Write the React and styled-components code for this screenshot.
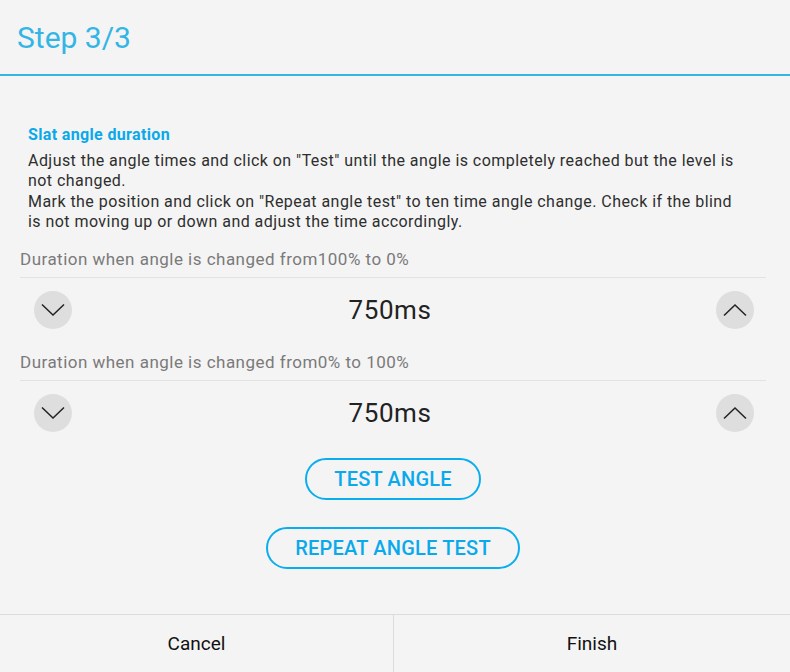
import React, { useState } from 'react';
import styled, { createGlobalStyle } from 'styled-components';

const GlobalStyle = createGlobalStyle`
  html, body {
    margin: 0;
    padding: 0;
    background: #f4f4f4;
  }
  body {
    font-family: Roboto, "Liberation Sans", sans-serif;
  }
  #root {
    height: 672px;
  }
`;

const Page = styled.div`
  display: flex;
  flex-direction: column;
  width: 790px;
  height: 672px;
  background: #f4f4f4;
`;

const Header = styled.div`
  height: 74px;
  display: flex;
  align-items: center;
  padding-left: 17px;
  border-bottom: 2px solid #33b5e5;
`;

const Title = styled.h1`
  margin: 0;
  font-size: 30px;
  font-weight: 400;
  color: #33b5e5;
`;

const Content = styled.div`
  flex: 1;
  padding: 49px 24px 0 20px;
`;

const Intro = styled.div`
  padding: 0 26px 0 8px;
`;

const SectionTitle = styled.div`
  font-size: 16px;
  line-height: 20px;
  font-weight: 700;
  letter-spacing: 0.35px;
  color: #0aa9ea;
  margin-bottom: 6px;
`;

const Paragraph = styled.p`
  margin: 0;
  font-size: 16px;
  line-height: 20.3px;
  letter-spacing: 0.45px;
  color: #2e2e2e;
`;

const Field = styled.div`
  margin-top: ${(p) => p.$top}px;
`;

const Label = styled.div`
  font-size: 17px;
  line-height: 20px;
  letter-spacing: 0.48px;
  color: #7a7a7a;
  padding-bottom: 8px;
  border-bottom: 1px solid #e2e2e2;
`;

const Row = styled.div`
  height: 64px;
  display: flex;
  align-items: center;
  justify-content: space-between;
  padding: 0 12px 0 14px;
`;

const Value = styled.span`
  margin-right: 8px;
  font-size: 26px;
  letter-spacing: 0.6px;
  color: #222;
`;

const RoundButton = styled.button`
  width: 38px;
  height: 38px;
  border-radius: 50%;
  border: none;
  background: #dedede;
  display: flex;
  align-items: center;
  justify-content: center;
  padding: 0;
  cursor: pointer;
`;

const Actions = styled.div`
  display: flex;
  flex-direction: column;
  align-items: center;
  gap: 27px;
  margin-top: 13px;
`;

const OutlineButton = styled.button`
  height: 42px;
  padding: 0 ${(p) => p.$pad}px;
  border: 2px solid #0aaeef;
  border-radius: 21px;
  background: transparent;
  color: #0aa9ec;
  font-family: Roboto, "Liberation Sans", sans-serif;
  font-size: 20px;
  font-weight: 500;
  letter-spacing: 0.2px;
  cursor: pointer;
`;

const Footer = styled.div`
  height: 57px;
  display: grid;
  grid-template-columns: 393px 1fr;
  border-top: 1px solid #dcdcdc;
`;

const FooterButton = styled.button`
  border: none;
  border-left: ${(p) => (p.$divider ? '1px solid #dcdcdc' : 'none')};
  background: transparent;
  font-family: Roboto, "Liberation Sans", sans-serif;
  font-size: 19px;
  color: #111;
  cursor: pointer;
`;

const Chevron = ({ up }) => (
  <svg width="24" height="14" viewBox="0 0 24 14">
    <polyline
      points={up ? '1,12.5 12,2 23,12.5' : '1,1.5 12,12 23,1.5'}
      fill="none"
      stroke="#222"
      strokeWidth="1.5"
    />
  </svg>
);

function Stepper({ label, value, onChange, top }) {
  return (
    <Field $top={top}>
      <Label>{label}</Label>
      <Row>
        <RoundButton onClick={() => onChange(value - 50)}>
          <Chevron />
        </RoundButton>
        <Value>{value}ms</Value>
        <RoundButton onClick={() => onChange(value + 50)}>
          <Chevron up />
        </RoundButton>
      </Row>
    </Field>
  );
}

export default function App() {
  const [closing, setClosing] = useState(750);
  const [opening, setOpening] = useState(750);

  return (
    <Page>
      <GlobalStyle />
      <Header>
        <Title>Step 3/3</Title>
      </Header>
      <Content>
        <Intro>
          <SectionTitle>Slat angle duration</SectionTitle>
          <Paragraph>
            Adjust the angle times and click on "Test" until the angle is completely reached but the level is not changed.
            <br />
            Mark the position and click on "Repeat angle test" to ten time angle change. Check if the blind is not moving up or down and adjust the time accordingly.
          </Paragraph>
        </Intro>
        <Stepper
          top={17}
          label="Duration when angle is changed from100% to 0%"
          value={closing}
          onChange={setClosing}
        />
        <Stepper
          top={10}
          label="Duration when angle is changed from0% to 100%"
          value={opening}
          onChange={setOpening}
        />
        <Actions>
          <OutlineButton $pad={27}>TEST ANGLE</OutlineButton>
          <OutlineButton $pad={27}>REPEAT ANGLE TEST</OutlineButton>
        </Actions>
      </Content>
      <Footer>
        <FooterButton>Cancel</FooterButton>
        <FooterButton $divider>Finish</FooterButton>
      </Footer>
    </Page>
  );
}
